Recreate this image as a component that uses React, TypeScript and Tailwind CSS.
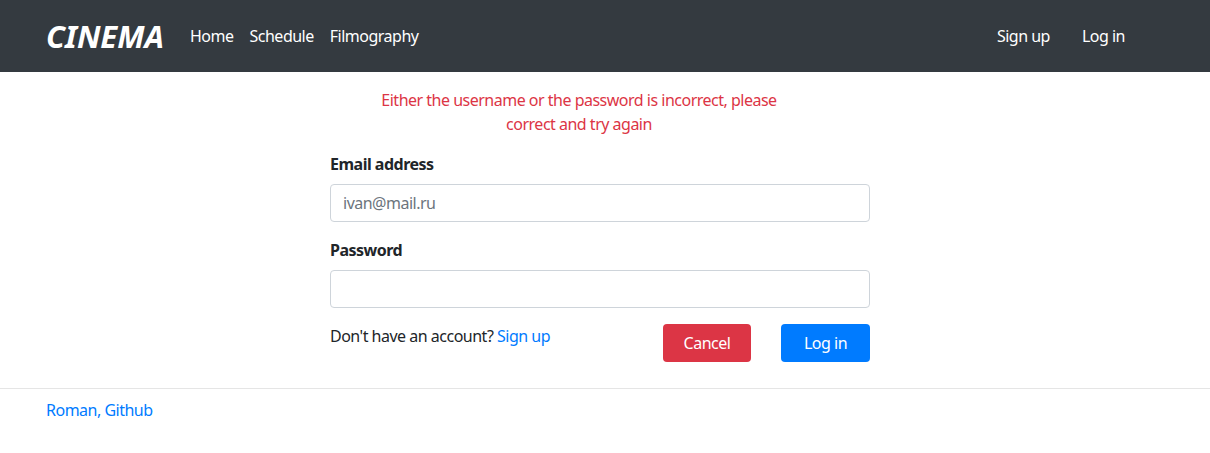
import React from 'react';

const font = { fontFamily: '"Noto Sans", "Open Sans", Arial, sans-serif' };

export default function App() {
  return (
    <div className="min-h-screen bg-white text-[#212529] tracking-[-0.5px]" style={font}>
      {/* Navbar */}
      <nav className="h-[72px] bg-[#343a40] flex items-center pl-[46px] pr-[85px]">
        <a href="#" className="text-white italic font-bold text-[31px] leading-none tracking-[0px] mr-[26px]">
          CINEMA
        </a>
        <div className="flex items-center gap-[16px] text-[16px] text-white">
          <a href="#">Home</a>
          <a href="#">Schedule</a>
          <a href="#">Filmography</a>
        </div>
        <div className="ml-auto flex items-center gap-[32px] text-[16px] text-white">
          <a href="#">Sign up</a>
          <a href="#">Log in</a>
        </div>
      </nav>

      {/* Form */}
      <main className="w-[540px] ml-[330px] pt-[16px] pb-[26px] text-[16px]">
        <p className="w-[404px] ml-[47px] text-center text-[#dc3545] leading-[24px] mb-[16px]">
          Either the username or the password is incorrect, please correct and try again
        </p>
        <label className="block font-bold leading-[24px] mb-[8px]">Email address</label>
        <input
          className="block w-full h-[38px] px-[12px] border border-[#ced4da] rounded-[4px] outline-none placeholder:text-[#6c757d] mb-[16px]"
          placeholder="ivan@mail.ru"
        />
        <label className="block font-bold leading-[24px] mb-[8px]">Password</label>
        <input
          type="password"
          className="block w-full h-[38px] px-[12px] border border-[#ced4da] rounded-[4px] outline-none mb-[16px]"
        />
        <div className="flex items-start">
          <span className="leading-[24px]">
            Don't have an account? <a href="#" className="text-[#007bff]">Sign up</a>
          </span>
          <div className="ml-auto flex gap-[30px]">
            <button className="w-[88px] h-[38px] rounded-[4px] bg-[#dc3545] text-white">Cancel</button>
            <button className="w-[89px] h-[38px] rounded-[4px] bg-[#007bff] text-white">Log in</button>
          </div>
        </div>
      </main>

      {/* Footer */}
      <footer className="border-t border-[#e5e5e5] pl-[46px] pt-[9px]">
        <a href="#" className="text-[#007bff] text-[16px] leading-[24px]">Roman, Github</a>
      </footer>
    </div>
  );
}
